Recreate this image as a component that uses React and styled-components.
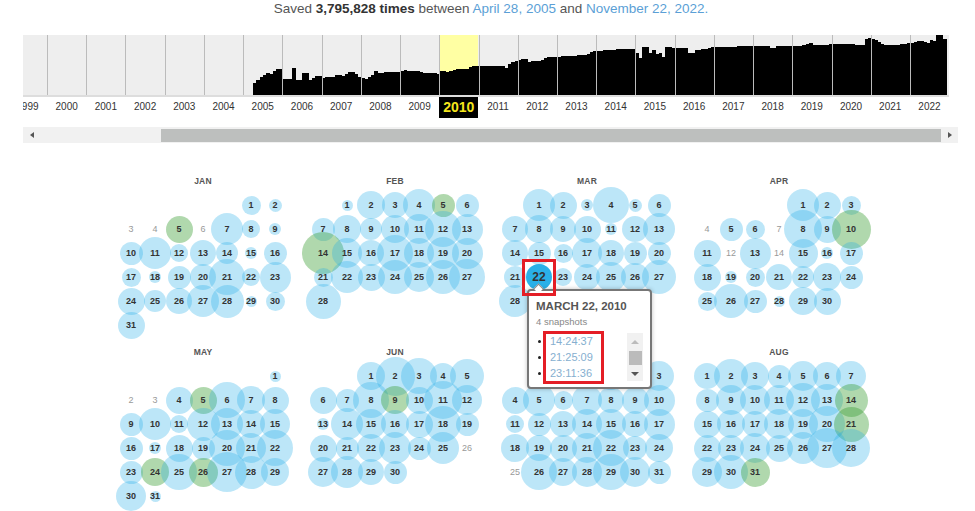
import React from 'react'
import styled, { createGlobalStyle } from 'styled-components'

const GlobalStyle = createGlobalStyle`
  html, body {
    margin: 0;
    padding: 0;
    background: #fff;
  }
  body {
    font-family: "Liberation Sans", Arial, sans-serif;
    color: #333;
  }
`

const YEAR_WIDTH = 39.23
const BAR_WIDTH = YEAR_WIDTH / 12
const BASELINE = 94.7
const years = Array.from({ length: 24 }, (_, i) => 1999 + i)

// top edge of the bars, read off the capture at 3x
const leftEdge = [[760,253],[770,245],[780,235],[790,228],[800,218],[810,224],[820,215],[830,207],[850,206],[852,236],[875,236],[877,204],[888,204],[889,240],[905,240],[906,218],[925,218],[926,243],[935,240],[945,228],[965,228],[968,234],[1000,230],[1008,224],[1030,228],[1050,215],[1065,218],[1080,232],[1100,236],[1115,228],[1125,212],[1135,218],[1190,216],[1200,216],[1210,209],[1225,212],[1250,212],[1270,218],[1315,221],[1325,210],[1345,215],[1365,208],[1400,208],[1420,198],[1470,197]]
const rightEdge = [[0,198],[40,198],[50,205],[65,186],[85,180],[110,176],[115,185],[160,181],[170,173],[205,170],[250,167],[290,165],[310,152],[330,155],[340,150],[370,150],[400,146],[440,148],[445,175],[457,175],[458,142],[475,142],[476,160],[490,160],[491,150],[500,150],[501,165],[515,155],[516,170],[524,170],[525,145],[535,140],[555,145],[590,143],[592,160],[610,160],[618,150],[660,145],[670,140],[700,142],[760,138],[835,138],[850,150],[858,138],[905,138],[940,137],[958,128],[975,135],[1060,132],[1120,135],[1130,115],[1140,113],[1160,122],[1180,135],[1220,135],[1260,130],[1290,123],[1315,128],[1320,120],[1335,122],[1340,107],[1355,104],[1358,116],[1367,116]]
const edge = [
  ...leftEdge.map(([x, y]) => [x / 3, y / 3]),
  ...rightEdge.map(([x, y]) => [x / 3 + 490, y / 3]),
]

function topAt(x) {
  const next = edge.findIndex(p => p[0] >= x)
  if (next <= 0) return edge[next === 0 ? 0 : edge.length - 1][1]
  const [x0, y0] = edge[next - 1]
  const [x1, y1] = edge[next]
  return y0 + ((y1 - y0) * (x - x0)) / (x1 - x0 || 1)
}

const bars = []
for (let x = 253.2; x < 945.7; x += BAR_WIDTH) {
  bars.push({ x, top: Math.round(topAt(x + BAR_WIDTH / 2)) })
}

const months = [
  { name: 'JAN', offset: 5, green: [5], sizes: [19,13,0,0,27,0,32,18,12,23,32,18,26,22,12,23,19,12,23,26,36,18,31,27,22,26,32,33,11,19,27] },
  { name: 'FEB', offset: 1, green: [5,14], sizes: [11,28,26,32,23,23,23,28,22,28,30,36,31,42,30,26,36,30,32,31,19,32,27,34,30,34,36,35] },
  { name: 'MAR', offset: 1, green: [], selected: 22, sizes: [32,27,12,36,13,23,26,28,26,27,12,26,32,26,23,19,30,26,23,23,22,26,18,26,30,28,34,32] },
  { name: 'APR', offset: 4, green: [10], sizes: [32,27,19,0,23,19,0,38,27,39,27,0,31,0,29,12,23,27,12,19,26,22,28,23,19,34,23,11,28,27] },
  { name: 'MAY', offset: 6, green: [5,24,26], sizes: [11,0,0,27,27,36,28,27,23,32,18,33,32,28,30,23,12,27,23,36,30,36,23,28,36,29,40,33,28,30,11] },
  { name: 'JUN', offset: 2, green: [9], sizes: [28,39,36,26,34,27,23,36,28,27,38,30,12,32,30,28,27,36,23,27,23,28,32,23,32,0,30,32,26,23] },
  { name: 'JUL', offset: 4, green: [], sizes: [28,26,30,27,32,19,30,26,27,31,18,23,26,30,30,26,31,28,26,27,30,36,24,28,0,36,28,30,36,30,23] },
  { name: 'AUG', offset: 0, green: [14,21,31], sizes: [26,34,28,23,30,28,30,23,30,30,30,34,32,33,27,28,26,30,30,36,35,27,26,30,27,32,40,38,30,34,29] },
]

const Page = styled.div`
  position: relative;
  width: 975px;
  height: 511px;
  overflow: hidden;
`

const Summary = styled.p`
  margin: 0;
  height: 18px;
  line-height: 18px;
  font-size: 13.5px;
  text-align: center;
  padding-left: 7px;
  color: #555;
  b { color: #333; }
  a { color: #5b9fd6; text-decoration: none; }
`

const Timeline = styled.div`
  margin: 17px 0 0 23px;
  width: 926px;
`

const Spark = styled.svg`
  display: block;
  width: 926px;
  height: 62px;
`

const YearRow = styled.div`
  display: flex;
  height: 21px;
  overflow: hidden;
  margin-right: -2px;
`

const Year = styled.div`
  flex: 0 0 ${YEAR_WIDTH}px;
  height: 21px;
  line-height: 20px;
  text-align: center;
  font-size: ${p => (p.$active ? '14px' : '10px')};
  font-weight: ${p => (p.$active ? 'bold' : 'normal')};
  color: ${p => (p.$active ? '#f5e61c' : '#333')};
  background: ${p => (p.$active ? '#000' : 'transparent')};
  &:first-child { margin-left: -15.2px; }
`

const Scrollbar = styled.div`
  display: flex;
  align-items: center;
  width: 935px;
  height: 16px;
  margin: 9px 0 0 23px;
  background: #f1f1f1;
`

const ArrowButton = styled.div`
  flex: 0 0 17px;
  display: flex;
  align-items: center;
  justify-content: center;
`

const Triangle = styled.span`
  width: 0;
  height: 0;
  border-style: solid;
  border-color: transparent;
  ${p => p.$dir === 'left' && `border-width: 3.5px 4px 3.5px 0; border-right-color: ${p.$color};`}
  ${p => p.$dir === 'right' && `border-width: 3.5px 0 3.5px 4px; border-left-color: ${p.$color};`}
  ${p => p.$dir === 'up' && `border-width: 0 4px 4px 4px; border-bottom-color: ${p.$color};`}
  ${p => p.$dir === 'down' && `border-width: 4px 4px 0 4px; border-top-color: ${p.$color};`}
`

const TrackGap = styled.div`
  flex: 0 0 121px;
`

const Thumb = styled.div`
  flex: 1;
  height: 13px;
  background: #bdbfbe;
`

const Calendar = styled.div`
  display: grid;
  grid-template-columns: repeat(4, 168px);
  column-gap: 24px;
  row-gap: 3px;
  margin: 26px 0 0 119px;
`

const MonthTitle = styled.div`
  height: 24px;
  line-height: 24px;
  text-align: center;
  font-size: 8.5px;
  font-weight: bold;
  letter-spacing: 0.2px;
  color: #555;
`

const Days = styled.div`
  display: grid;
  grid-template-columns: repeat(7, 24px);
  grid-auto-rows: 24px;
`

const Day = styled.div`
  position: relative;
  display: flex;
  align-items: center;
  justify-content: center;
  grid-column-start: ${p => p.$start || 'auto'};
`

const Bubble = styled.span`
  position: absolute;
  left: 50%;
  top: 50%;
  width: ${p => p.$size}px;
  height: ${p => p.$size}px;
  margin: ${p => -p.$size / 2}px 0 0 ${p => -p.$size / 2}px;
  border-radius: 50%;
  background: ${p => (p.$selected ? '#2ab0e8' : p.$green ? 'rgba(58, 158, 50, 0.4)' : 'rgba(32, 172, 232, 0.3)')};
`

const DayNumber = styled.span`
  position: relative;
  z-index: 1;
  font-size: ${p => (p.$selected ? '12px' : '9px')};
  font-weight: ${p => (p.$empty ? 'normal' : 'bold')};
  color: ${p => (p.$empty ? '#999' : '#333')};
`

const RedBox = styled.div`
  position: absolute;
  z-index: 6;
  box-sizing: border-box;
  border: 3px solid #e41e26;
  pointer-events: none;
`

const DayMark = styled(RedBox)`
  left: -5px;
  top: -6px;
  width: 34px;
  height: 37px;
`

const Tooltip = styled.div`
  position: absolute;
  z-index: 5;
  left: 0;
  top: 24px;
  box-sizing: border-box;
  width: 125px;
  height: 100px;
  padding: 8px 8px 0 7px;
  background: #fff;
  border: 2px solid #777;
  border-radius: 4px;
  box-shadow: 0 0 4px rgba(0, 0, 0, 0.25);
  &::before {
    content: '';
    position: absolute;
    left: 6px;
    top: -6px;
    width: 6px;
    height: 6px;
    background: #fff;
    border-top: 1px solid #888;
    border-left: 1px solid #888;
    transform: rotate(45deg);
  }
`

const TipTitle = styled.div`
  font-size: 11.5px;
  line-height: 14px;
  font-weight: bold;
  color: #555;
  white-space: nowrap;
`

const TipCount = styled.div`
  margin-top: 2px;
  font-size: 9.5px;
  line-height: 13px;
  color: #888;
`

const TipBody = styled.div`
  display: flex;
  justify-content: space-between;
  margin: 5px -1px 0 0;
`

const TimeList = styled.ul`
  position: relative;
  list-style: none;
  margin: 0;
  padding: 0;
`

const TimeItem = styled.li`
  display: flex;
  align-items: center;
  height: 16px;
  font-size: 11px;
  color: #86afd0;
  &::before {
    content: '';
    width: 3px;
    height: 3px;
    margin: 0 9px 0 2px;
    border-radius: 50%;
    background: #222;
  }
`

const TimesMark = styled(RedBox)`
  left: 7px;
  top: -2px;
  width: 61px;
  height: 53px;
`

const MiniScroll = styled.div`
  display: flex;
  flex-direction: column;
  align-items: center;
  justify-content: space-between;
  box-sizing: border-box;
  width: 16px;
  height: 48px;
  padding: 7px 0 5px;
  background: #f1f1f1;
`

const MiniThumb = styled.div`
  width: 13px;
  height: 14px;
  background: #bbb;
`

function Sparkline() {
  return (
    <Spark viewBox="23 35 926 62" shapeRendering="crispEdges">
      <rect x="23" y="35" width="926" height="60" fill="#eee" />
      <rect x="439" y="35" width="39" height="60" fill="#ffffa3" />
      {bars.map(b => (
        <rect key={b.x} x={b.x} y={b.top} width={BAR_WIDTH + 0.3} height={BASELINE - b.top} fill="#000" />
      ))}
      <rect x="23" y="95" width="926" height="2" fill="#ddd" />
      {years.slice(1).map((y, i) => (
        <line key={y} x1={47.5 + i * YEAR_WIDTH} x2={47.5 + i * YEAR_WIDTH} y1="35" y2="95" stroke="#bbb" strokeWidth="1" />
      ))}
    </Spark>
  )
}

function SnapshotTip() {
  return (
    <Tooltip>
      <TipTitle>MARCH 22, 2010</TipTitle>
      <TipCount>4 snapshots</TipCount>
      <TipBody>
        <TimeList>
          <TimeItem>14:24:37</TimeItem>
          <TimeItem>21:25:09</TimeItem>
          <TimeItem>23:11:36</TimeItem>
          <TimesMark />
        </TimeList>
        <MiniScroll>
          <Triangle $dir="up" $color="#bbb" />
          <MiniThumb />
          <Triangle $dir="down" $color="#555" />
        </MiniScroll>
      </TipBody>
    </Tooltip>
  )
}

function Month({ month }) {
  return (
    <div>
      <MonthTitle>{month.name}</MonthTitle>
      <Days>
        {month.sizes.map((size, i) => {
          const day = i + 1
          const selected = month.selected === day
          return (
            <Day key={day} $start={i === 0 ? month.offset + 1 : null}>
              {size > 0 && <Bubble $size={size} $green={month.green.includes(day)} $selected={selected} />}
              <DayNumber $empty={size === 0} $selected={selected}>{day}</DayNumber>
              {selected && <DayMark />}
              {selected && <SnapshotTip />}
            </Day>
          )
        })}
      </Days>
    </div>
  )
}

export default function App() {
  return (
    <Page>
      <GlobalStyle />
      <Summary>
        Saved <b>3,795,828 times</b> between <a href="#">April 28, 2005</a> and <a href="#">November 22, 2022.</a>
      </Summary>
      <Timeline>
        <Sparkline />
        <YearRow>
          {years.map(y => <Year key={y} $active={y === 2010}>{y}</Year>)}
        </YearRow>
      </Timeline>
      <Scrollbar>
        <ArrowButton><Triangle $dir="left" $color="#555" /></ArrowButton>
        <TrackGap />
        <Thumb />
        <ArrowButton><Triangle $dir="right" $color="#555" /></ArrowButton>
      </Scrollbar>
      <Calendar>
        {months.map(m => <Month key={m.name} month={m} />)}
      </Calendar>
    </Page>
  )
}
